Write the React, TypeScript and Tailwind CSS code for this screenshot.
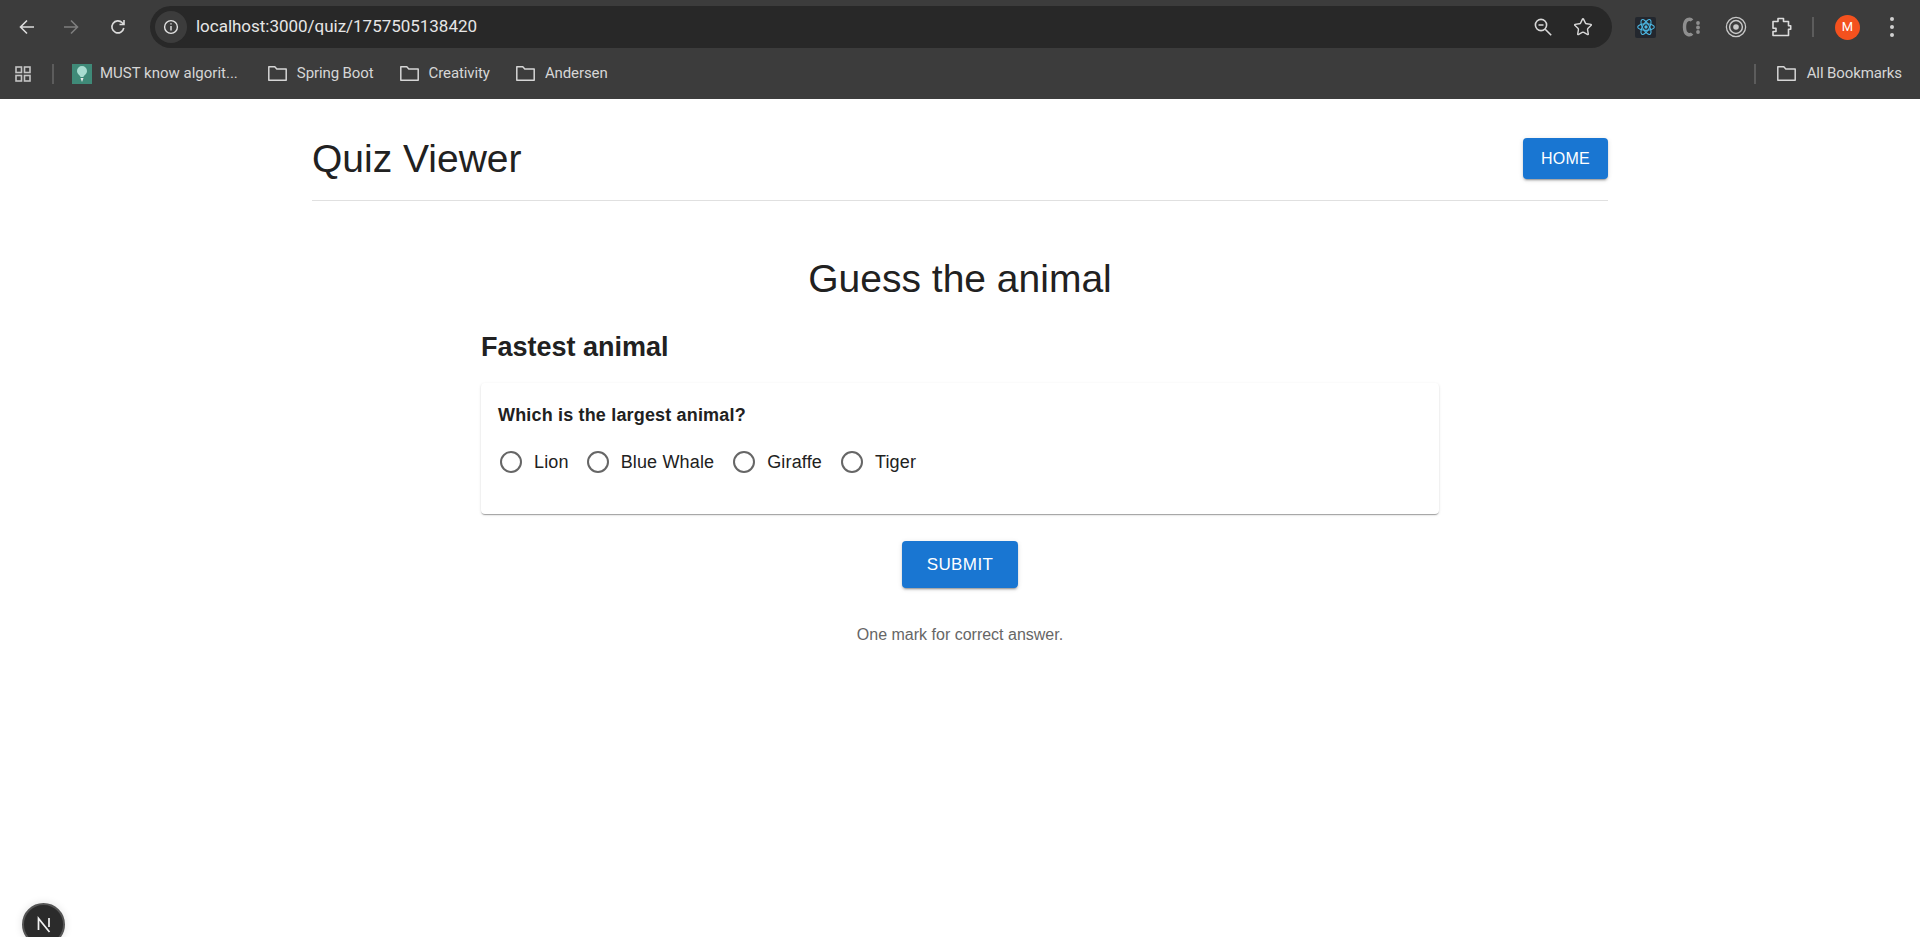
import { Star } from 'lucide-react';

const BOOKMARK_FOLDERS = ['Spring Boot', 'Creativity', 'Andersen'];
const OPTIONS = ['Lion', 'Blue Whale', 'Giraffe', 'Tiger'];

function FolderIcon() {
  return (
    <svg width="21" height="21" viewBox="0 0 21 21" fill="none" stroke="#d6d6d6" strokeWidth="1.5" className="shrink-0">
      <path d="M1.8 3.8h6l2 2.2h9.4v11.2H1.8z" strokeLinejoin="round" />
    </svg>
  );
}

function ChromeBar() {
  return (
    <div className="h-[99px] bg-[#3c3c3c] font-['Roboto',sans-serif] text-[#e3e3e3]">
      {/* toolbar */}
      <div className="flex h-[53px] items-center pt-[1px]">
        <div className="flex w-[150px] shrink-0 items-center pl-[17px]">
          <svg width="20" height="20" viewBox="0 0 20 20" fill="none" stroke="#dcdcdc" strokeWidth="1.6"><path d="M17 10H4M10 3.5 3.5 10l6.5 6.5" /></svg>
          <svg width="20" height="20" viewBox="0 0 20 20" fill="none" stroke="#7e7e7e" strokeWidth="1.6" className="ml-[24px]"><path d="M3 10h13M10 3.5l6.5 6.5-6.5 6.5" /></svg>
          <svg width="20" height="20" viewBox="0 0 20 20" fill="none" stroke="#dcdcdc" strokeWidth="1.6" className="ml-[27px]"><path d="M15.8 11a6 6 0 1 1-1.5-5.2L16 7.5M16 3v4.5h-4.5" /></svg>
        </div>
        <div className="flex h-[42px] w-[1462px] shrink-0 items-center rounded-full bg-[#282828] pl-[5px] pr-[19px]">
          <div className="flex h-[32px] w-[32px] items-center justify-center rounded-full bg-[#3c3c3c]">
            <svg width="18" height="18" viewBox="0 0 18 18" fill="none" stroke="#e3e3e3" strokeWidth="1.4"><circle cx="9" cy="9" r="6.4" /><path d="M9 8v4.5M9 5.2v1.4" /></svg>
          </div>
          <span className="ml-[9px] text-[17px] tracking-[-0.02px] text-[#e6e6e6]">localhost:3000/quiz/1757505138420</span>
          <div className="ml-auto flex items-center gap-[20px]">
            <svg width="20" height="20" viewBox="0 0 20 20" fill="none" stroke="#d8d8d8" strokeWidth="1.6"><circle cx="8" cy="8" r="5.6" /><path d="M5.5 8h5M12.2 12.2l6 6" /></svg>
            <Star size={20} strokeWidth={1.7} className="text-[#d8d8d8]" />
          </div>
        </div>
        <div className="ml-[23px] flex items-center">
          <div className="flex h-[21px] w-[21px] items-center justify-center rounded-[2px] bg-[#23272e]">
            <svg width="20" height="20" viewBox="-12 -12 24 24" fill="none" stroke="#4cb8e4" strokeWidth="1.3">
              <circle r="2" fill="#4cb8e4" stroke="none" />
              <ellipse rx="10" ry="4" />
              <ellipse rx="10" ry="4" transform="rotate(60)" />
              <ellipse rx="10" ry="4" transform="rotate(120)" />
            </svg>
          </div>
          <svg width="22" height="24" viewBox="0 0 22 24" className="ml-[25px]" fill="none">
            <path d="M11 5.5C9.5 3.5 3.5 3 3.5 12s6 8.5 7.5 6.5" stroke="#8f8f8f" strokeWidth="3.4" />
            <circle cx="17" cy="8" r="1.9" fill="#8f8f8f" />
            <circle cx="17" cy="12.5" r="1.9" fill="#8f8f8f" />
            <circle cx="17" cy="17" r="1.9" fill="#8f8f8f" />
          </svg>
          <svg width="22" height="22" viewBox="0 0 22 22" fill="none" stroke="#c8c8c8" className="ml-[22px]">
            <circle cx="11" cy="11" r="9.6" strokeWidth="1.3" />
            <circle cx="11" cy="11" r="6.4" strokeWidth="1.5" />
            <circle cx="11" cy="11" r="2.8" fill="#c8c8c8" stroke="none" />
          </svg>
          <svg width="22" height="22" viewBox="0 0 22 22" fill="none" stroke="#dcdcdc" strokeWidth="1.6" className="ml-[24px]">
            <path d="M2 5.5h5V2.5h5.5v3h5v4.2h2.2v3.6h-2.2v6.2H2v-4h3v-3.2H2z" strokeLinejoin="round" />
          </svg>
          <div className="ml-[19px] h-[20px] w-[2px] bg-[#5c5c5c]" />
          <div className="ml-[21px] flex h-[25px] w-[25px] items-center justify-center rounded-full bg-[#f4511e] text-[13px] text-white">M</div>
          <div className="ml-[30px] flex flex-col gap-[4px]">
            <span className="h-[4px] w-[4px] rounded-full bg-[#d0d0d0]" />
            <span className="h-[4px] w-[4px] rounded-full bg-[#d0d0d0]" />
            <span className="h-[4px] w-[4px] rounded-full bg-[#d0d0d0]" />
          </div>
        </div>
      </div>
      {/* bookmarks */}
      <div className="flex h-[46px] items-center pl-[13px] pr-[18px] pb-[5px] text-[15px] tracking-[-0.1px] text-[#d6d6d6]">
        <svg width="20" height="20" viewBox="0 0 20 20" fill="none" stroke="#c4c4c4" strokeWidth="1.6">
          <rect x="3" y="3" width="5.5" height="5.5" /><rect x="11.5" y="3" width="5.5" height="5.5" />
          <rect x="3" y="11.5" width="5.5" height="5.5" /><rect x="11.5" y="11.5" width="5.5" height="5.5" />
        </svg>
        <div className="ml-[19px] h-[20px] w-[2px] bg-[#5c5c5c]" />
        <div className="ml-[18px] flex h-[20px] w-[20px] items-center justify-center bg-[#3f8a78]">
          <svg width="14" height="18" viewBox="0 0 14 18">
            <path d="M7 1a5 5 0 0 1 5 5c0 3-3 4-3.5 6h-3C5 10 2 9 2 6a5 5 0 0 1 5-5z" fill="#a8dcd0" />
            <path d="M5.5 13h3L7 17z" fill="#e8e8e8" />
          </svg>
        </div>
        <span className="ml-[8px] whitespace-nowrap tracking-normal">MUST know algorit...</span>
        {BOOKMARK_FOLDERS.map((name, i) => (
          <div key={name} className={`flex items-center gap-[9px] ${i === 0 ? 'ml-[29px]' : 'ml-[25px]'}`}>
            <FolderIcon />
            <span>{name}</span>
          </div>
        ))}
        <div className="ml-auto h-[20px] w-[2px] bg-[#5c5c5c]" />
        <div className="ml-[20px] flex items-center gap-[10px]">
          <FolderIcon />
          <span>All Bookmarks</span>
        </div>
      </div>
    </div>
  );
}

function ContainedButton({ label, className }: { label: string; className: string }) {
  return (
    <button className={`rounded-[4px] bg-[#1976d2] uppercase leading-none text-white shadow-[0_3px_1px_-2px_rgba(0,0,0,0.2),0_2px_2px_0_rgba(0,0,0,0.14),0_1px_5px_0_rgba(0,0,0,0.12)] ${className}`}>
      {label}
    </button>
  );
}

export default function App() {
  return (
    <div className="relative h-[937px] overflow-hidden bg-white font-['Liberation_Sans',Arial,sans-serif] text-[#212121]">
      <ChromeBar />

      <div className="mx-auto w-[1296px]">
        <header className="flex h-[102px] items-center justify-between border-b border-[#e0e0e0] pt-[18px]">
          <h1 className="text-[39px] leading-none">Quiz Viewer</h1>
          <ContainedButton label="Home" className="h-[41px] w-[85px] text-[16px] tracking-[0.3px]" />
        </header>

        <main className="mx-auto flex w-[958px] flex-col">
          <h2 className="mt-[55px] text-center text-[39px] leading-[46px]">Guess the animal</h2>
          <h3 className="mt-[29px] text-[27px] font-bold leading-[32px]">Fastest animal</h3>

          <section className="mt-[20px] h-[131px] rounded-[4px] bg-white pl-[17px] pt-[20px] shadow-[0_2px_1px_-1px_rgba(0,0,0,0.2),0_1px_1px_0_rgba(0,0,0,0.14),0_1px_3px_0_rgba(0,0,0,0.12)]">
            <p className="text-[18px] font-bold leading-[24px] tracking-[0.17px]">Which is the largest animal?</p>
            <div className="mt-[23px] flex items-center text-[18px] leading-[24px] tracking-[0.15px]">
              {OPTIONS.map((opt, i) => (
                <label key={opt} className={`flex items-center ${i === 0 ? 'mr-[16px]' : 'mr-[17px]'}`}>
                  <span className="ml-[2px] h-[22px] w-[22px] rounded-full border-[2.5px] border-[#666666]" />
                  <span className="ml-[12px]">{opt}</span>
                </label>
              ))}
            </div>
          </section>

          <ContainedButton label="Submit" className="mx-auto mt-[27px] h-[47px] w-[116px] text-[17px] tracking-[0.4px]" />
          <p className="mt-[37px] text-center text-[16px] leading-[20px] text-[#666666]">One mark for correct answer.</p>
        </main>
      </div>

      {/* next dev indicator */}
      <div className="absolute left-[22px] top-[903px] flex h-[43px] w-[43px] items-center justify-center rounded-full border-2 border-[#555555] bg-[#2b2b2b] pb-[2px] text-white shadow-[0_0_8px_rgba(0,0,0,0.12)]">
        <svg width="18" height="18" viewBox="0 0 18 18" fill="none" stroke="#f2f2f2" strokeWidth="1.7">
          <path d="M3.5 15V3.5L14.5 17M14 3v9" />
        </svg>
      </div>
    </div>
  );
}
